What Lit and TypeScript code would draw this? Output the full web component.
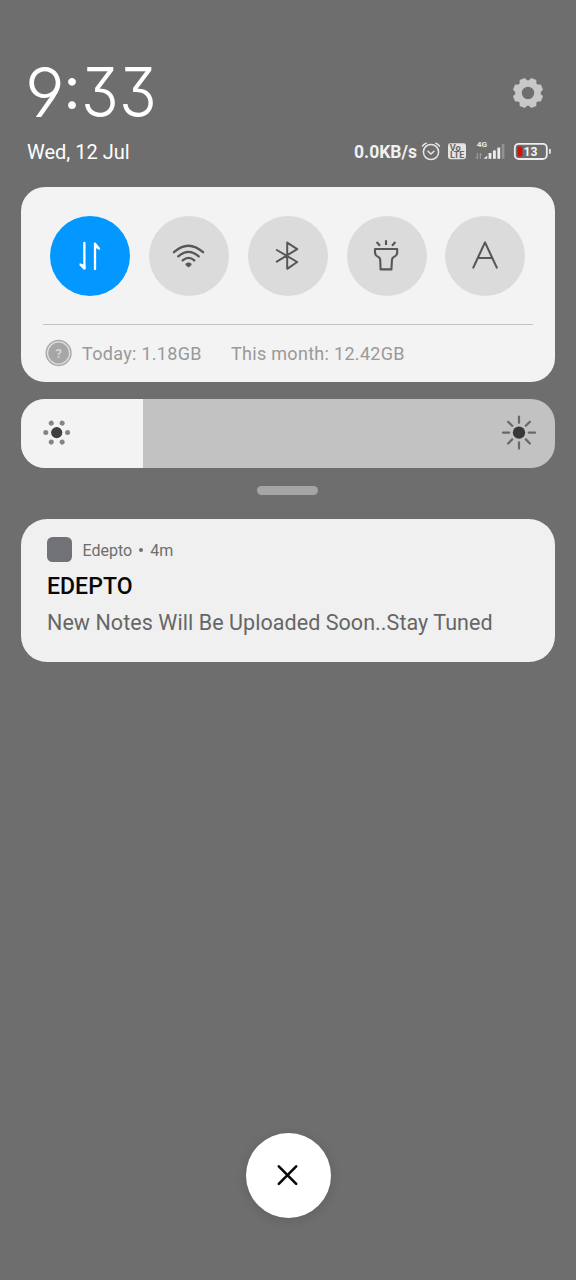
import { LitElement, html, css, svg } from "lit";
import { customElement } from "lit/decorators.js";
import { classMap } from "lit/directives/class-map.js";

const gearPath = (() => {
  const pts: string[] = [];
  const n = 8;
  for (let i = 0; i < n; i++) {
    const c = (i + 0.5) * (Math.PI * 2) / n;
    for (const [r, d] of [[11.9, -0.27], [14.3, -0.15], [14.3, 0.15], [11.9, 0.27]]) {
      pts.push(`${(16 + r * Math.cos(c + d)).toFixed(2)} ${(16 + r * Math.sin(c + d)).toFixed(2)}`);
    }
  }
  return `M${pts.join("L")}ZM16 8.8a7.2 7.2 0 1 0 0 14.4a7.2 7.2 0 1 0 0-14.4Z`;
})();

const toggles = [
  {
    name: "Mobile data", on: true,
    icon: svg`<g fill="none" stroke="#fff" stroke-width="2.3" stroke-linecap="round" stroke-linejoin="round">
      <path d="M14.4 7V32.6L10.6 28.8"/><path d="M25 33V7.6L28.8 12.4"/></g>
      <path d="M9.2 27.2L15.4 29V33.6Z M30.6 13.8L24 11.6V6.6Z" fill="#fff"/>`,
  },
  {
    name: "Wi-Fi", on: false,
    icon: svg`<g fill="none" stroke="#575757" stroke-width="2.3" stroke-linecap="round">
      <path d="M4.9 16.2Q19.3 3.2 34.1 16.2"/><path d="M9.3 20.4Q19.5 11.4 29.7 20.4"/><path d="M13.7 24.4Q19.5 19.4 25.3 24.4"/></g>
      <path d="M16.5 27.8Q19.5 25 22.5 27.8V29L19.5 31.6L16.5 29Z" fill="#575757"/>`,
  },
  {
    name: "Bluetooth", on: false,
    icon: svg`<path d="M8.8 14L29.2 26L19.2 32.8V6.6L29.2 13.2L8.8 25.6" fill="none" stroke="#575757" stroke-width="2" stroke-linecap="round" stroke-linejoin="round"/>`,
  },
  {
    name: "Torch", on: false,
    icon: svg`<g fill="none" stroke="#575757" stroke-width="2.1" stroke-linejoin="round" transform="translate(-.8 0)">
      <path d="M8.8 13H31V16.5Q31 19.6 27.6 21Q25.9 21.8 25.8 23.5L25.2 33.4H14.4L14 23.5Q13.9 21.8 12.2 21Q8.8 19.6 8.8 16.5Z"/>
      <path d="M10.4 6L13.8 9.8M19.8 4.2V9M29.2 6L25.8 9.8"/></g>`,
  },
  {
    name: "Auto brightness", on: false,
    icon: svg`<path d="M8.3 31.6L20 6.4L31.8 31.6M12.8 22H27.2" fill="none" stroke="#575757" stroke-width="2.1" stroke-linecap="round" stroke-linejoin="round"/>`,
  },
];

@customElement("status-icons")
export class StatusIcons extends LitElement {
  static styles = css`
    :host { display: block; width: 132px; height: 28px; }
    svg { display: block; }
    text { font-family: Roboto, sans-serif; font-weight: 700; }
  `;
  render() {
    return html`<svg width="132" height="28" viewBox="420 138 132 28">
      <g fill="none" stroke="#e6e6e6" stroke-width="1.5" stroke-linecap="round">
        <circle cx="431" cy="152" r="7.6"/>
        <path d="M428 151.3L430.9 154L434 151.3M422.5 146.2Q423.8 143.8 426.2 143.2M439.5 146.2Q438.2 143.8 435.8 143.2"/>
      </g>
      <rect x="448" y="143.2" width="18" height="16" rx="2.4" fill="#e4e4e4"/>
      <g fill="#676767">
        <text x="449.8" y="150.7" font-size="8.2" textLength="11" lengthAdjust="spacingAndGlyphs">Vo</text>
        <text x="450" y="158.2" font-size="8.2" textLength="14.4" lengthAdjust="spacingAndGlyphs">LTE</text>
      </g>
      <text x="476.8" y="147.2" font-size="8" fill="#e8e8e8" textLength="10.4" lengthAdjust="spacingAndGlyphs">4G</text>
      <g stroke="#a5a5a5" stroke-width="1" fill="none"><path d="M477.3 153V158.6L475.9 157.2M480.3 159V153.4L481.7 154.8"/></g>
      <g fill="#ededed">
        <path d="M483.6 158.8L487.2 155.4V158.8Z"/>
        <rect x="488.6" y="153" width="2.8" height="5.8"/>
        <rect x="493" y="150.4" width="2.8" height="8.4"/>
        <rect x="497.4" y="147.6" width="2.8" height="11.2"/>
        <rect x="501.8" y="144" width="2.6" height="14.8" fill="#929292"/>
      </g>
      <rect x="514.8" y="143.8" width="32" height="15.2" rx="4" fill="none" stroke="#ededed" stroke-width="1.8"/>
      <rect x="549" y="148.8" width="1.8" height="5" rx=".9" fill="#e8e8e8"/>
      <rect x="517.4" y="146.4" width="5" height="10" rx="1" fill="#d2100f"/>
      <text x="523.4" y="155.5" font-size="12" fill="#f4f4f4" textLength="14" lengthAdjust="spacingAndGlyphs">13</text>
    </svg>`;
  }
}

@customElement("quick-toggles")
export class QuickToggles extends LitElement {
  static styles = css`
    :host { display: flex; justify-content: space-between; padding: 0 29.5px 0 29.3px; }
    .toggle { width: 80px; height: 80px; border-radius: 50%; background: #dbdbdb; display: grid; place-items: center; }
    .on { background: #0298ff; }
    svg { display: block; }
  `;
  render() {
    return toggles.map(t => html`<div class=${classMap({ toggle: true, on: t.on })} role="button" aria-label=${t.name}>
      <svg width="40" height="40" viewBox="0 0 40 40">${t.icon}</svg></div>`);
  }
}

@customElement("brightness-slider")
export class BrightnessSlider extends LitElement {
  static styles = css`
    :host { display: flex; height: 69.5px; border-radius: 24px; overflow: hidden; background: #c2c2c2; justify-content: space-between; }
    .level { width: 122px; background: #f3f3f3; display: flex; align-items: center; }
    .low { margin-left: 16px; }
    .high { margin-right: 16px; align-self: center; }
  `;
  render() {
    const low = [0, 60, 120, 180, 240, 300];
    const high = [0, 45, 90, 135, 180, 225, 270, 315];
    return html`
      <div class="level"><svg class="low" width="40" height="40" viewBox="-20 -20 40 40">
        <circle cx="-.3" cy="-.4" r="5.6" fill="#404040"/>
        ${low.map(a => svg`<circle cx="10.9" cy="0" r="2.5" fill="#858585" transform="translate(-.3 -.4) rotate(${a})"/>`)}
      </svg></div>
      <svg class="high" width="40" height="40" viewBox="-20 -20 40 40">
        <circle cx="0" cy="-.4" r="6.2" fill="#383838"/>
        ${high.map(a => svg`<path d="M${a % 90 ? 9.6 : 9.8} 0H${a % 90 ? 15.4 : 16}" stroke="#686868" stroke-width="2.2" stroke-linecap="round" transform="translate(0 -.4) rotate(${a})"/>`)}
      </svg>`;
  }
}

@customElement("app-root")
export class AppRoot extends LitElement {
  static styles = css`
    :host { display: flex; flex-direction: column; box-sizing: border-box; height: 1280px; padding: 50px 21px 62px;
      background: #6e6e6e; font-family: Roboto, sans-serif; overflow: hidden; }
    svg { display: block; }
    .top { display: flex; justify-content: space-between; height: 84px; padding: 0 11px 0 6px; }
    .clock { display: flex; font: 270 69px/84px Inter, sans-serif; color: #fff; font-feature-settings: "cv04", "cv09"; white-space: nowrap; }
    .hour { width: 37px; margin-left: -2px; }
    .colon { width: 20px; text-align: center; font-size: 59px; font-weight: 400; transform: translateY(-4.5px); }
    .minute { margin-left: -1px; width: 37.8px; transform: scaleX(.9); transform-origin: 0 50%; }
    .minute + .minute { margin-left: 0; }
    .gear { margin-top: 27px; }
    .bar { display: flex; align-items: center; height: 36px; padding: 0 3px 0 6px; color: #fff; }
    .date { font-size: 20px; flex: 1; }
    .speed { font-size: 17.5px; font-weight: 700; color: #f0f0f0; margin-right: 3px; }
    .panel { margin-top: 16.5px; height: 195.5px; box-sizing: border-box; padding-top: 29.5px; border-radius: 24px; background: #f3f3f3; }
    .rule { height: 1px; background: #c4c4c4; margin: 28px 22px 0; }
    .usage { display: flex; align-items: center; height: 56px; padding-left: 24px; font-size: 18px; color: #999; letter-spacing: .3px; }
    .today { margin-left: 9px; width: 149px; }
    .slider { margin-top: 16.5px; }
    .handle { width: 61px; height: 9px; border-radius: 5px; background: #a5a5a5; align-self: center; margin: 18px 1px 0 0; }
    .note { margin-top: 23.5px; height: 143px; box-sizing: border-box; padding: 18px 26px 0; border-radius: 26px; background: #f0f0f0; }
    .source { display: flex; align-items: center; height: 26px; font-size: 16px; color: #6e6e6e; }
    .source span:not(.app):not(.dot) { padding-top: 2px; }
    .app { width: 25px; height: 25px; border-radius: 5.5px; background: #717275; margin-right: 10.5px; }
    .dot { width: 4px; height: 4px; border-radius: 50%; background: #707070; margin: 1px 7px 0; }
    .title { font-size: 23px; line-height: 30px; font-weight: 500; color: #080808; margin-top: 9px; letter-spacing: .05px; }
    .body { font-size: 21.5px; line-height: 30px; color: #666; margin-top: 6px; white-space: nowrap; letter-spacing: .06px; }
    .close { margin-top: auto; align-self: center; width: 85px; height: 85px; border-radius: 50%; background: #fff;
      display: grid; place-items: center; box-shadow: 0 2px 12px rgba(0,0,0,.12); }
  `;
  render() {
    return html`
      <div class="top">
        <div class="clock"><span class="hour">9</span><span class="colon">:</span><span class="minute">3</span><span class="minute">3</span></div>
        <svg class="gear" width="32" height="32" viewBox="0 0 32 32"><path d=${gearPath} fill="#c8c8c8" stroke="#c8c8c8" stroke-width="2" stroke-linejoin="round" fill-rule="evenodd"/></svg>
      </div>
      <div class="bar"><span class="date">Wed, 12 Jul</span><span class="speed">0.0KB/s</span><status-icons></status-icons></div>
      <div class="panel">
        <quick-toggles></quick-toggles>
        <div class="rule"></div>
        <div class="usage">
          <svg width="28" height="28" viewBox="0 0 28 28"><circle cx="13.6" cy="14" r="12.4" fill="#dedede" stroke="#aaa" stroke-width="1.5"/><circle cx="13.6" cy="14" r="10.4" fill="#a6a6a6"/>
            <text x="13.8" y="18.6" text-anchor="middle" font-size="13" font-weight="500" fill="#dadada">?</text></svg>
          <span class="today">Today: 1.18GB</span><span class="month">This month: 12.42GB</span>
        </div>
      </div>
      <brightness-slider class="slider"></brightness-slider>
      <div class="handle"></div>
      <div class="note">
        <div class="source"><span class="app"></span><span>Edepto</span><span class="dot"></span><span>4m</span></div>
        <div class="title">EDEPTO</div>
        <div class="body">New Notes Will Be Uploaded Soon..Stay Tuned</div>
      </div>
      <div class="close" role="button" aria-label="Clear all">
        <svg width="24" height="24" viewBox="0 0 24 24"><path d="M2.8 2.4L20.2 19.8M20.2 2.4L2.8 19.8" stroke="#080808" stroke-width="2.6" stroke-linecap="round"/></svg>
      </div>`;
  }
}
